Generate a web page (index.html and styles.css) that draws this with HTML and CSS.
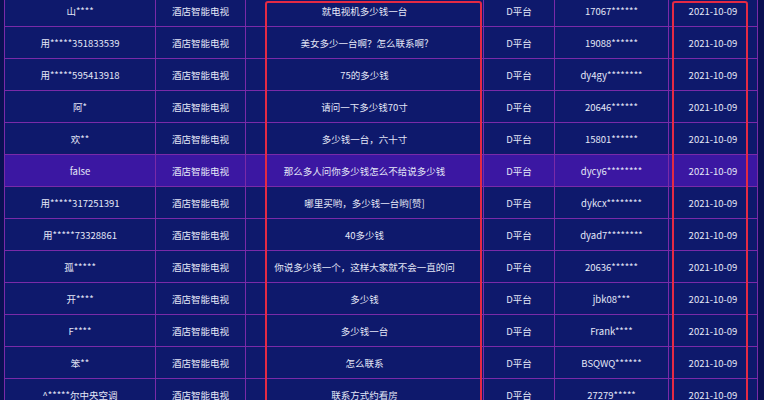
FILE: index.html
```html
<!DOCTYPE html>
<html lang="zh-CN">
<head>
<meta charset="utf-8">
<link rel="stylesheet" href="styles.css">
</head>
<body>
<div class="frame">
  <div class="table">
    <div class="row"><div class="c c1">山****</div><div class="c c2">酒店智能电视</div><div class="c c3">就电视机多少钱一台</div><div class="c c4">D平台</div><div class="c c5">17067******</div><div class="c c6">2021-10-09</div></div>
    <div class="row"><div class="c c1">用*****351833539</div><div class="c c2">酒店智能电视</div><div class="c c3">美女多少一台啊？怎么联系啊?</div><div class="c c4">D平台</div><div class="c c5">19088******</div><div class="c c6">2021-10-09</div></div>
    <div class="row"><div class="c c1">用*****595413918</div><div class="c c2">酒店智能电视</div><div class="c c3">75的多少钱</div><div class="c c4">D平台</div><div class="c c5">dy4gy********</div><div class="c c6">2021-10-09</div></div>
    <div class="row"><div class="c c1">阿*</div><div class="c c2">酒店智能电视</div><div class="c c3">请问一下多少钱70寸</div><div class="c c4">D平台</div><div class="c c5">20646******</div><div class="c c6">2021-10-09</div></div>
    <div class="row"><div class="c c1">欢**</div><div class="c c2">酒店智能电视</div><div class="c c3">多少钱一台，六十寸</div><div class="c c4">D平台</div><div class="c c5">15801******</div><div class="c c6">2021-10-09</div></div>
    <div class="row hl"><div class="c c1">false</div><div class="c c2">酒店智能电视</div><div class="c c3">那么多人问你多少钱怎么不给说多少钱</div><div class="c c4">D平台</div><div class="c c5">dycy6********</div><div class="c c6">2021-10-09</div></div>
    <div class="row"><div class="c c1">用*****317251391</div><div class="c c2">酒店智能电视</div><div class="c c3">哪里买哟，多少钱一台哟[赞]</div><div class="c c4">D平台</div><div class="c c5">dykcx********</div><div class="c c6">2021-10-09</div></div>
    <div class="row"><div class="c c1">用*****73328861</div><div class="c c2">酒店智能电视</div><div class="c c3">40多少钱</div><div class="c c4">D平台</div><div class="c c5">dyad7********</div><div class="c c6">2021-10-09</div></div>
    <div class="row"><div class="c c1">孤*****</div><div class="c c2">酒店智能电视</div><div class="c c3">你说多少钱一个，这样大家就不会一直的问</div><div class="c c4">D平台</div><div class="c c5">20636******</div><div class="c c6">2021-10-09</div></div>
    <div class="row"><div class="c c1">开****</div><div class="c c2">酒店智能电视</div><div class="c c3">多少钱</div><div class="c c4">D平台</div><div class="c c5">jbk08***</div><div class="c c6">2021-10-09</div></div>
    <div class="row"><div class="c c1">F****</div><div class="c c2">酒店智能电视</div><div class="c c3">多少钱一台</div><div class="c c4">D平台</div><div class="c c5">Frank****</div><div class="c c6">2021-10-09</div></div>
    <div class="row"><div class="c c1">笨**</div><div class="c c2">酒店智能电视</div><div class="c c3">怎么联系</div><div class="c c4">D平台</div><div class="c c5">BSQWQ******</div><div class="c c6">2021-10-09</div></div>
    <div class="row"><div class="c c1">^*****尔中央空调</div><div class="c c2">酒店智能电视</div><div class="c c3">联系方式约看房</div><div class="c c4">D平台</div><div class="c c5">27279*****</div><div class="c c6">2021-10-09</div></div>
  </div>
  <div class="mark mark-content"></div>
  <div class="mark mark-date"></div>
</div>
</body>
</html>
```

FILE: styles.css
```css
html, body {
  margin: 0;
  padding: 0;
  background: #0a1052;
  overflow: hidden;
  width: 764px;
  height: 400px;
}

.frame {
  position: relative;
  width: 764px;
  height: 400px;
  overflow: hidden;
}

.table {
  margin-top: -5px;
  margin-left: 4px;
  width: 754px;
  background: #0e196c;
  border-left: 1px solid #7a2aa8;
  border-right: 1px solid #7a2aa8;
  box-sizing: border-box;
  font-family: "Noto Sans CJK SC", "Noto Sans", sans-serif;
  font-size: 9.5px;
  color: #e4e7f7;
}

.row {
  display: grid;
  grid-template-columns: 151px 90px 238px 71px 114px 88px;
  height: 32px;
  border-bottom: 1px solid #7a2aa8;
  box-sizing: border-box;
}

.row.hl {
  background: #3b17a2;
}

.c {
  display: flex;
  align-items: center;
  justify-content: center;
  border-right: 1px solid #7a2aa8;
  white-space: nowrap;
  overflow: hidden;
}

.c6 {
  border-right: none;
}

.mark {
  position: absolute;
  border: 2px solid #e42a44;
  border-radius: 3px;
  box-sizing: border-box;
  top: 1px;
  height: 420px;
}

.mark-content {
  left: 265px;
  width: 217px;
}

.mark-date {
  left: 672px;
  width: 76px;
}
```
